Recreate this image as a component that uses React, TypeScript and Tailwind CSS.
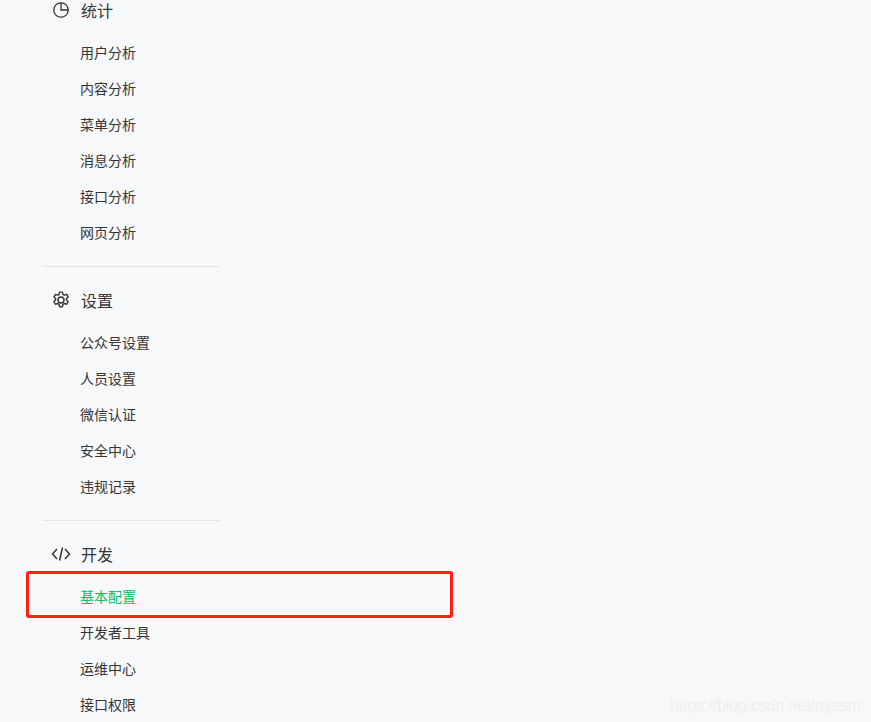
import type { ReactNode } from "react";

const PieIcon = () => (
  <svg viewBox="0 0 18 18" className="w-[18px] h-[18px]" fill="none" stroke="currentColor" strokeWidth={1.3}>
    <circle cx="9" cy="9" r="7.2" />
    <path d="M9 1.8V9h7.2" />
  </svg>
);

const GearIcon = () => (
  <svg viewBox="0 0 24 24" className="w-[20px] h-[20px]" fill="none" stroke="currentColor" strokeWidth={1.7} strokeLinejoin="round">
    <path d="M10.2 2.500h3.600l.6 2.800 1.700.9 2.700-1 1.800 3.100-2.100 1.900v1.900l2.100 1.900-1.800 3.100-2.700-.9-1.700 1-.6 2.800h-3.600l-.6-2.800-1.700-1-2.700.9-1.800-3.100 2.100-1.900v-1.900L3.600 8.300l1.800-3.100 2.700 1 1.700-.9z" />
    <circle cx="12" cy="12" r="3.600" />
  </svg>
);

const CodeIcon = () => (
  <svg viewBox="0 0 20 16" className="w-[20px] h-4" fill="none" stroke="currentColor" strokeWidth={1.5}>
    <path d="M6 3 1.500 8 6 13M14 3l4.500 5L14 13M11.500 1.500l-3 13" />
  </svg>
);

const sections: { title: string; icon: ReactNode; items: string[] }[] = [
  {
    title: "统计",
    icon: <PieIcon />,
    items: ["用户分析", "内容分析", "菜单分析", "消息分析", "接口分析", "网页分析"],
  },
  {
    title: "设置",
    icon: <GearIcon />,
    items: ["公众号设置", "人员设置", "微信认证", "安全中心", "违规记录"],
  },
  {
    title: "开发",
    icon: <CodeIcon />,
    items: ["基本配置", "开发者工具", "运维中心", "接口权限"],
  },
];

export default function App() {
  return (
    <div className="relative h-[722px] w-[871px] overflow-hidden bg-[#f6f8f9] font-['Noto_Sans_CJK_SC','Liberation_Sans',sans-serif] text-[#353535]">
      <div className="ml-[43px] w-[177px]">
        {sections.map((s, i) => (
          <div key={s.title}>
            {i > 0 && <div className="mt-4 mb-[15px] h-px bg-[#e4e6e9]" />}
            <div className={`flex items-center ${i === 0 ? "h-5 mb-3.5" : "h-9 mb-1.5"}`}>
              <span className="flex w-9 mr-0.5 justify-center">{s.icon}</span>
              <span className="text-base leading-none">{s.title}</span>
            </div>
            {s.items.map((item) => (
              <div
                key={item}
                className={`flex h-9 items-center pl-[37px] text-sm ${item === "基本配置" ? "text-[#07c160]" : ""}`}
              >
                {item}
              </div>
            ))}
          </div>
        ))}
      </div>

      {/* red annotation drawn over the screenshot */}
      <div className="absolute left-[26px] top-[571px] h-[47px] w-[427px] rounded-[3px] border-[3px] border-[#fe1f14]" />

      <div className="absolute left-[670px] top-[694px] font-['Liberation_Sans',sans-serif] text-[15.7px] text-[#eeeff1]">
        https://blog.csdn.net/nyasm
      </div>
    </div>
  );
}
